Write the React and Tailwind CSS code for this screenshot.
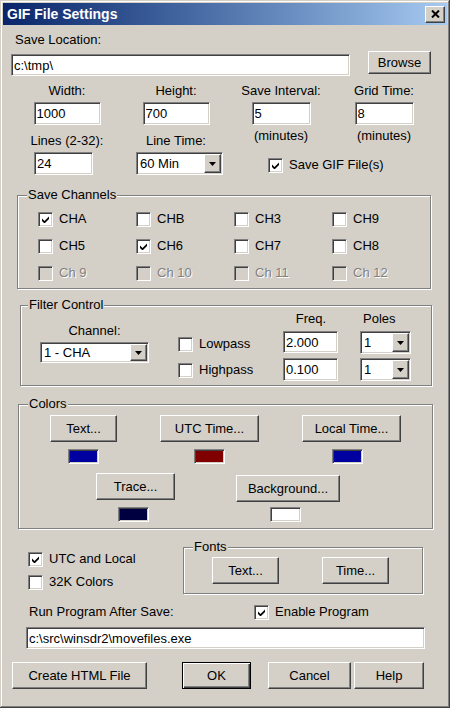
import React from 'react';

const sunken =
  'border border-t-[#808080] border-l-[#808080] border-b-white border-r-white shadow-[inset_1px_1px_0_#404040,inset_-1px_-1px_0_#d4d0c8]';
const raised =
  'bg-[#d4d0c8] border border-t-white border-l-white border-b-[#404040] border-r-[#404040] shadow-[inset_-1px_-1px_0_#808080]';
const etched = 'relative border border-[#808080] shadow-[inset_1px_1px_0_white,1px_1px_0_white]';

function Button({ children, className = '', isDefault }) {
  return (
    <button
      type="button"
      className={`flex items-center justify-center ${
        isDefault
          ? 'bg-[#d4d0c8] border border-black shadow-[inset_1px_1px_0_white,inset_-1px_-1px_0_#404040,inset_-2px_-2px_0_#808080]'
          : raised
      } ${className}`}
    >
      {children}
    </button>
  );
}

function TextBox({ value, className = '' }) {
  return (
    <input
      readOnly
      value={value}
      className={`bg-white ${sunken} px-[2px] outline-none ${className}`}
    />
  );
}

function Combo({ value, className = '' }) {
  return (
    <div className={`bg-white ${sunken} p-[1px] flex ${className}`}>
      <span className="flex-1 flex items-center pl-[2px]">{value}</span>
      <span className={`${raised} w-[17px] flex items-center justify-center`}>
        <svg width="7" height="4" viewBox="0 0 7 4">
          <path d="M0 0h7L3.5 4z" fill="black" />
        </svg>
      </span>
    </div>
  );
}

function Check({ label, checked, disabled, className = '' }) {
  return (
    <div className={`flex items-center h-4 ${className}`}>
      <span
        className={`w-[15px] h-[15px] shrink-0 flex items-center justify-center ${
          disabled ? 'bg-[#d4d0c8]' : 'bg-white'
        } ${sunken}`}
      >
        {checked && (
          <svg width="7" height="7" viewBox="0 0 7 7">
            <polygon points="0,2.5 2.5,5 7,0.5 7,3 2.5,7.5 0,5" fill="black" />
          </svg>
        )}
      </span>
      <span
        className={`ml-[6px] whitespace-nowrap ${
          disabled ? 'text-[#808080] [text-shadow:1px_1px_0_#fff]' : ''
        }`}
      >
        {label}
      </span>
    </div>
  );
}

function Group({ title, className = '', labelLeft = 'left-[9px]', children }) {
  return (
    <div className={`${etched} ${className}`}>
      <span className={`absolute -top-[9px] ${labelLeft} bg-[#d4d0c8] px-[1px] leading-4`}>
        {title}
      </span>
      {children}
    </div>
  );
}

const channels = [
  { label: 'CHA', checked: true },
  { label: 'CHB' },
  { label: 'CH3' },
  { label: 'CH9' },
  { label: 'CH5' },
  { label: 'CH6', checked: true },
  { label: 'CH7' },
  { label: 'CH8' },
  { label: 'Ch 9', disabled: true },
  { label: 'Ch 10', disabled: true },
  { label: 'Ch 11', disabled: true },
  { label: 'Ch 12', disabled: true },
];

export default function App() {
  return (
    <div className="w-[450px] h-[708px] overflow-hidden bg-[#d4d0c8] text-black text-[13px] leading-4 font-['Liberation_Sans',Arial,sans-serif] shadow-[inset_-1px_-1px_0_#404040,inset_1px_1px_0_#d4d0c8,inset_-2px_-2px_0_#808080,inset_2px_2px_0_white]">
      {/* Title bar */}
      <div className="mx-[3px] mt-[3px] h-[22px] flex items-center justify-between bg-gradient-to-r from-[#0a246a] to-[#a6caf0] pl-[4px] pr-[2px]">
        <span className="text-white font-bold text-[14px]">GIF File Settings</span>
        <span className={`${raised} w-[20px] h-[17px] flex items-center justify-center`}>
          <svg width="9" height="8" viewBox="0 0 9 8">
            <path d="M1 0.5l7 7M8 0.5l-7 7" stroke="black" strokeWidth="2" />
          </svg>
        </span>
      </div>

      {/* Save location */}
      <div className="ml-[15px] mt-[7px]">Save Location:</div>
      <div className="flex items-start mt-[3px]">
        <TextBox value="c:\tmp\" className="ml-[11px] mt-[3px] w-[339px] h-[22px]" />
        <Button className="ml-[18px] w-[63px] h-[23px]">Browse</Button>
      </div>

      {/* Size / interval */}
      <div className="flex ml-[15px] mt-[7px] text-center">
        <div className="w-[104px]">Width:</div>
        <div className="w-[114px]">Height:</div>
        <div className="w-[96px]">Save Interval:</div>
        <div className="w-[110px]">Grid Time:</div>
      </div>
      <div className="flex ml-[15px] mt-[3px]">
        <div className="w-[104px] flex justify-center">
          <TextBox value="1000" className="w-[67px] h-[23px]" />
        </div>
        <div className="w-[114px] flex justify-center">
          <TextBox value="700" className="w-[67px] h-[23px]" />
        </div>
        <div className="w-[96px] flex justify-center">
          <TextBox value="5" className="w-[59px] h-[23px]" />
        </div>
        <div className="w-[110px] flex justify-center">
          <TextBox value="8" className="w-[59px] h-[23px]" />
        </div>
      </div>
      <div className="flex items-start ml-[15px] text-center">
        <div className="w-[104px] mt-[8px]">Lines (2-32):</div>
        <div className="w-[114px] mt-[8px]">Line Time:</div>
        <div className="w-[96px] mt-[3px]">(minutes)</div>
        <div className="w-[110px] mt-[3px]">(minutes)</div>
      </div>
      <div className="flex items-start mt-[3px]">
        <TextBox value="24" className="ml-[34px] w-[59px] h-[23px]" />
        <Combo value="60 Min" className="ml-[43px] w-[87px] h-[23px]" />
        <Check label="Save GIF File(s)" checked className="ml-[45px] mt-[5px]" />
      </div>

      {/* Save channels */}
      <Group title="Save Channels" className="ml-[17px] mt-[20px] w-[414px] h-[94px]">
        <div className="grid grid-cols-[98px_98px_98px_98px] gap-y-[11px] pl-[20px] mt-[15px]">
          {channels.map((c) => (
            <Check key={c.label} label={c.label} checked={c.checked} disabled={c.disabled} />
          ))}
        </div>
      </Group>

      {/* Filter control */}
      <Group title="Filter Control" labelLeft="left-[7px]" className="ml-[20px] mt-[16px] w-[412px] h-[81px]">
        <div className="flex items-start">
          <div className="ml-[19px] w-[109px] mt-[17px] flex flex-col items-center">
            <div>Channel:</div>
            <Combo value="1 - CHA" className="mt-[3px] w-[109px] h-[21px]" />
          </div>
          <div className="ml-[29px] w-[105px] mt-[30px]">
            <Check label="Lowpass" />
            <Check label="Highpass" className="mt-[10px]" />
          </div>
          <div className="w-[55px] mt-[5px] flex flex-col items-center">
            <div className="pl-[1px]">Freq.</div>
            <TextBox value="2.000" className="mt-[4px] w-[55px] h-[22px]" />
            <TextBox value="0.100" className="mt-[5px] w-[55px] h-[23px]" />
          </div>
          <div className="ml-[22px] w-[51px] mt-[5px]">
            <div className="pl-[3px]">Poles</div>
            <Combo value="1" className="mt-[4px] w-[51px] h-[23px]" />
            <Combo value="1" className="mt-[4px] w-[51px] h-[23px]" />
          </div>
        </div>
      </Group>

      {/* Colors */}
      <Group title="Colors" className="ml-[18px] mt-[18px] w-[415px] h-[125px]">
        <div className="flex items-start mt-[10px]">
          <div className="ml-[31px] flex flex-col items-center">
            <Button className="w-[67px] h-[27px]">Text...</Button>
            <span className={`mt-[7px] w-[31px] h-[15px] bg-[#0000a0] ${sunken}`} />
          </div>
          <div className="ml-[43px] flex flex-col items-center">
            <Button className="w-[99px] h-[27px]">UTC Time...</Button>
            <span className={`mt-[7px] w-[31px] h-[15px] bg-[#800000] ${sunken}`} />
          </div>
          <div className="ml-[43px] flex flex-col items-center">
            <Button className="w-[99px] h-[27px]">Local Time...</Button>
            <span className={`mt-[7px] mr-[8px] w-[31px] h-[15px] bg-[#0000a0] ${sunken}`} />
          </div>
        </div>
        <div className="flex items-start mt-[9px]">
          <div className="ml-[77px] flex flex-col items-center">
            <Button className="w-[79px] h-[27px]">Trace...</Button>
            <span className={`mt-[7px] mr-[4px] w-[31px] h-[15px] bg-[#000040] ${sunken}`} />
          </div>
          <div className="ml-[61px] mt-[2px] flex flex-col items-center">
            <Button className="w-[104px] h-[27px]">Background...</Button>
            <span className={`mt-[5px] mr-[5px] w-[31px] h-[15px] bg-white ${sunken}`} />
          </div>
        </div>
      </Group>

      {/* Options + fonts */}
      <div className="flex items-start">
        <div className="ml-[28px] w-[155px] mt-[22px]">
          <Check label="UTC and Local" checked />
          <Check label="32K Colors" className="mt-[7px]" />
        </div>
        <Group title="Fonts" className="mt-[18px] w-[240px] h-[47px]">
          <div className="flex mt-[9px]">
            <Button className="ml-[28px] w-[67px] h-[27px]">Text...</Button>
            <Button className="ml-[43px] w-[67px] h-[27px]">Time...</Button>
          </div>
        </Group>
      </div>

      {/* Run program */}
      <div className="flex items-center mt-[10px]">
        <div className="ml-[29px] w-[225px]">Run Program After Save:</div>
        <Check label="Enable Program" checked />
      </div>
      <TextBox value="c:\src\winsdr2\movefiles.exe" className="block ml-[26px] mt-[7px] w-[399px] h-[22px]" />

      {/* Buttons */}
      <div className="flex mt-[13px]">
        <Button className="ml-[12px] w-[135px] h-[27px]">Create HTML File</Button>
        <Button isDefault className="ml-[35px] w-[69px] h-[27px]">OK</Button>
        <Button className="ml-[17px] w-[83px] h-[27px]">Cancel</Button>
        <Button className="ml-[3px] w-[70px] h-[27px]">Help</Button>
      </div>
    </div>
  );
}
